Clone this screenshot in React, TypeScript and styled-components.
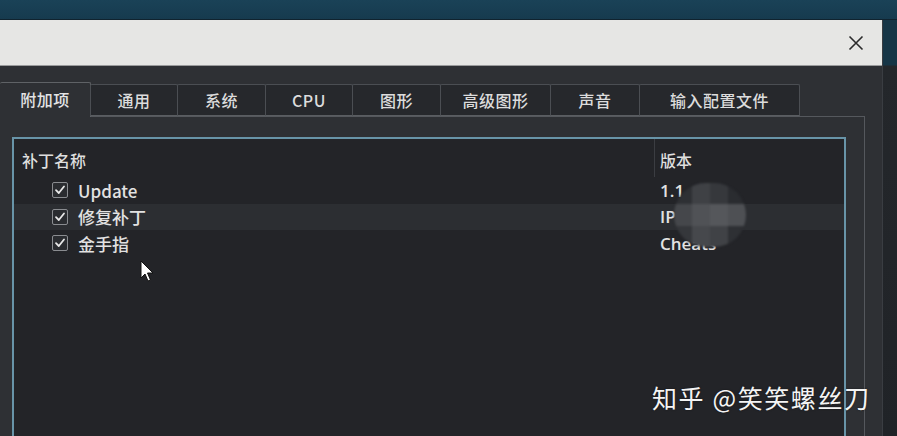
import React from "react";
import styled, { createGlobalStyle } from "styled-components";

const Global = createGlobalStyle`
  html, body { margin: 0; padding: 0; background: #173b4f; }
  body { font-family: "Noto Sans CJK SC", "Noto Sans", sans-serif; }
  * { box-sizing: border-box; }
`;

const Page = styled.div`
  width: 897px;
  height: 436px;
  overflow: hidden;
  position: relative;
  background: linear-gradient(180deg, #1a4257 0%, #163a4e 20px, #1b2c36 66px, #1f2226 67px, #1f2226 100%);
  display: flex;
  flex-direction: column;
`;

const TopStrip = styled.div`
  height: 20px;
  flex: none;
  border-bottom: 1px solid #10232f;
`;

const Row = styled.div`
  display: flex;
  flex: 1;
  min-height: 0;
`;

const Window = styled.div`
  width: 883px;
  flex: none;
  display: flex;
  flex-direction: column;
  background: #2e3034;
  border-right: 1px solid #3a3d42;
`;

const Gutter = styled.div`
  flex: 1;
  background: linear-gradient(180deg, #163546 0px, #163546 45px, #24272b 46px, #202327 100%);
`;

const TitleBar = styled.div`
  height: 46px;
  flex: none;
  background: #e6e6e4;
  border-bottom: 1px solid #9a9b9c;
  display: flex;
  align-items: center;
  justify-content: flex-end;
  padding-right: 17px;
`;

const CloseBtn = styled.div`
  width: 18px;
  height: 18px;
  display: flex;
  align-items: center;
  justify-content: center;
`;

const Body = styled.div`
  flex: 1;
  display: flex;
  flex-direction: column;
  padding: 15px 17px 0 0;
  min-height: 0;
`;

const TabBar = styled.div`
  display: flex;
  align-items: flex-end;
  height: 35px;
  flex: none;
  position: relative;
  z-index: 1;
`;

const Tab = styled.div<{ $w: number; $active?: boolean }>`
  width: ${(p) => p.$w}px;
  height: ${(p) => (p.$active ? 35 : 32)}px;
  margin-bottom: ${(p) => (p.$active ? -1 : 0)}px;
  background: ${(p) => (p.$active ? "#2e3034" : "#26282c")};
  border: 1px solid ${(p) => (p.$active ? "#5f6266" : "#4b4e53")};
  border-left-width: ${(p) => (p.$active ? 0 : 1)}px;
  border-bottom: ${(p) => (p.$active ? "none" : "1px solid #5a5d61")};
  border-radius: 2px 2px 0 0;
  margin-left: ${(p) => (p.$active ? 0 : -1)}px;
  display: flex;
  align-items: center;
  justify-content: center;
  color: ${(p) => (p.$active ? "#e4e4e4" : "#dcdcdc")};
  font-size: 16px;
  font-weight: 500;
  letter-spacing: 0.5px;
  padding-bottom: ${(p) => (p.$active ? 3 : 0)}px;
`;

const TabPane = styled.div`
  flex: 1;
  border: 1px solid #55585d;
  border-left: none;
  border-bottom: none;
  padding: 20px 18px 0 12px;
  display: flex;
  min-height: 0;
`;

const ListBox = styled.div`
  flex: 1;
  background: #232428;
  border: 2px solid #6894a8;
  border-bottom: none;
  position: relative;
  display: flex;
  flex-direction: column;
`;

const HeaderRow = styled.div`
  display: grid;
  grid-template-columns: 640px 1fr;
  height: 38px;
  flex: none;
`;

const HeaderCell = styled.div<{ $divider?: boolean }>`
  display: flex;
  align-items: center;
  padding-left: ${(p) => (p.$divider ? 5 : 8)}px;
  padding-top: 4px;
  color: #dedede;
  font-size: 16px;
  font-weight: 500;
  border-left: ${(p) => (p.$divider ? "1px solid #3b3d42" : "none")};
`;

const ItemRow = styled.div<{ $selected?: boolean }>`
  display: grid;
  grid-template-columns: 640px 1fr;
  height: 26.5px;
  background: ${(p) => (p.$selected ? "#2c2e32" : "transparent")};
  align-items: center;
`;

const NameCell = styled.div`
  display: flex;
  align-items: center;
  gap: 10px;
  padding-left: 38px;
  color: #e2e2e2;
  font-size: 17px;
  font-weight: 500;
`;

const VersionCell = styled.div`
  padding-left: 6px;
  color: #e2e2e2;
  font-size: 17px;
  font-family: "Open Sans", "Noto Sans", sans-serif;
  font-weight: 600;
`;

const Check = styled.div`
  width: 16px;
  height: 16px;
  border: 1.5px solid #8a8c90;
  border-radius: 2px;
  background: #2a2c30;
  display: flex;
  align-items: center;
  justify-content: center;
`;

const Blur = styled.div`
  position: absolute;
  left: 660px;
  top: 44px;
  width: 72px;
  height: 64px;
  border-radius: 32px;
  overflow: hidden;
  display: grid;
  grid-template-columns: repeat(4, 1fr);
  grid-template-rows: repeat(3, 1fr);
  filter: blur(1px);
`;

const Cell = styled.div<{ $c: string }>`
  background: ${(p) => p.$c};
`;

const Cursor = styled.div`
  position: absolute;
  left: 126px;
  top: 121px;
`;

const Watermark = styled.div`
  position: absolute;
  left: 652px;
  top: 379px;
  color: #f4f4f4;
  font-size: 25px;
  font-family: "Noto Sans CJK SC", sans-serif;
  letter-spacing: 1.6px;
  white-space: nowrap;
  text-shadow: 0 0 2px rgba(0, 0, 0, 0.5);
`;

const tabs: [string, number][] = [
  ["附加项", 91],
  ["通用", 88],
  ["系统", 89],
  ["CPU", 88],
  ["图形", 89],
  ["高级图形", 111],
  ["声音", 90],
  ["输入配置文件", 161],
];

const items = [
  { name: "Update", ver: "1.1" },
  { name: "修复补丁", ver: "IP" },
  { name: "金手指", ver: "Cheats" },
];

const blurColors = [
  "#2e3034", "#3f4145", "#36383c", "#2a2c30",
  "#45474b", "#505256", "#55575b", "#4e5054",
  "#35373b", "#46484c", "#404246", "#2e3034",
];

const CheckMark = () => (
  <svg width="12" height="12" viewBox="0 0 12 12">
    <path d="M2 6.2 L4.8 9 L10 2.5" stroke="#e8e8e8" strokeWidth="1.8" fill="none" strokeLinecap="round" strokeLinejoin="round" />
  </svg>
);

export default function App() {
  return (
    <>
      <Global />
      <Page>
        <TopStrip />
        <Row>
          <Window>
            <TitleBar>
              <CloseBtn>
                <svg width="16" height="16" viewBox="0 0 16 16">
                  <path d="M1.5 1.5 L14.5 14.5 M14.5 1.5 L1.5 14.5" stroke="#2b2b2b" strokeWidth="1.6" />
                </svg>
              </CloseBtn>
            </TitleBar>
            <Body>
              <TabBar>
                {tabs.map(([t, w], i) => (
                  <Tab key={t} $w={w} $active={i === 0}>
                    {t}
                  </Tab>
                ))}
              </TabBar>
              <TabPane>
                <ListBox>
                  <HeaderRow>
                    <HeaderCell>补丁名称</HeaderCell>
                    <HeaderCell $divider>版本</HeaderCell>
                  </HeaderRow>
                  {items.map((it, i) => (
                    <ItemRow key={it.name} $selected={i === 1}>
                      <NameCell>
                        <Check>
                          <CheckMark />
                        </Check>
                        {it.name}
                      </NameCell>
                      <VersionCell>{it.ver}</VersionCell>
                    </ItemRow>
                  ))}
                  <Blur>
                    {blurColors.map((c, i) => (
                      <Cell key={i} $c={c} />
                    ))}
                  </Blur>
                  <Cursor>
                    <svg width="16" height="24" viewBox="0 0 16 24">
                      <path d="M1 1 L1 18 L5 14 L8 21 L10.5 20 L7.5 13 L13 13 Z" fill="#ffffff" stroke="#111" strokeWidth="1" />
                    </svg>
                  </Cursor>
                </ListBox>
              </TabPane>
            </Body>
          </Window>
          <Gutter />
        </Row>
        <Watermark>知乎 @笑笑螺丝刀</Watermark>
      </Page>
    </>
  );
}
